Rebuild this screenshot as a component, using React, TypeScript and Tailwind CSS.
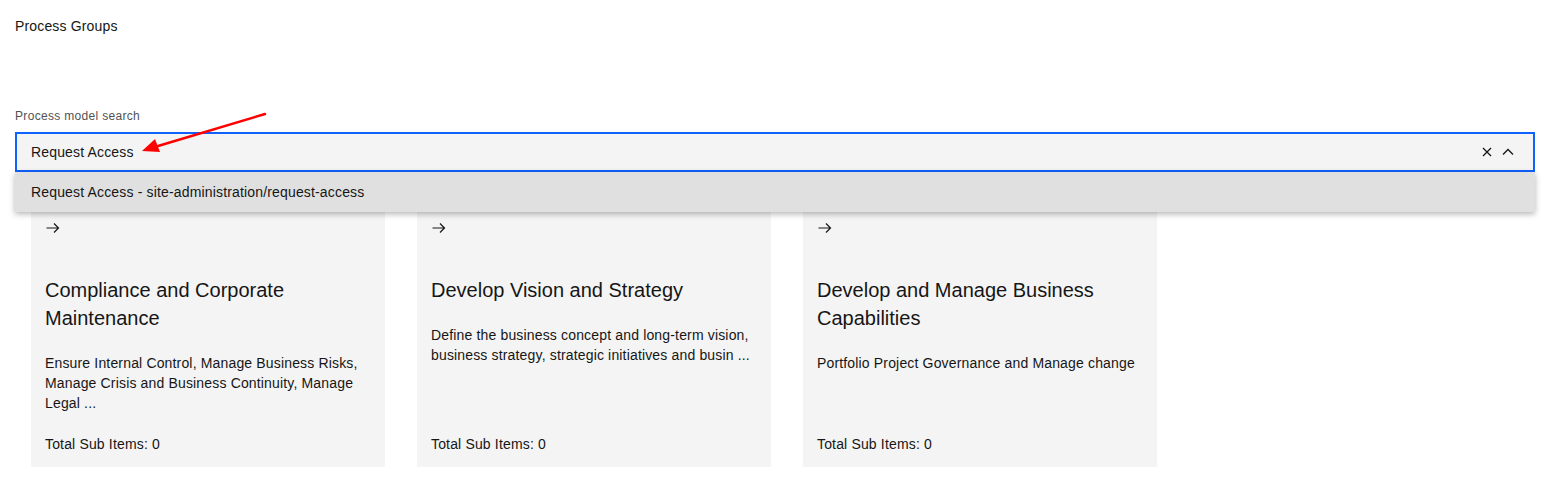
import React from "react";

const cards = [
  {
    title: "Compliance and Corporate Maintenance",
    desc: "Ensure Internal Control, Manage Business Risks, Manage Crisis and Business Continuity, Manage Legal ...",
  },
  {
    title: "Develop Vision and Strategy",
    desc: "Define the business concept and long-term vision, business strategy, strategic initiatives and busin ...",
  },
  {
    title: "Develop and Manage Business Capabilities",
    desc: "Portfolio Project Governance and Manage change",
  },
];

function ArrowRight() {
  return (
    <svg width="16" height="16" viewBox="0 0 16 16" fill="none">
      <path d="M1.5 8h12M9 3.5L13.5 8 9 12.5" stroke="#161616" strokeWidth="1.2" />
    </svg>
  );
}

export default function App() {
  return (
    <div
      className="relative min-h-[493px] bg-white text-[#161616]"
      style={{ fontFamily: '"Liberation Sans", Arial, sans-serif' }}
    >
      <div className="pl-[15px] pt-[16px] w-[1535px]">
        <div className="text-[14px] leading-[20px] tracking-[0.16px]">Process Groups</div>

        <div className="mt-[72px] text-[12px] leading-[16px] tracking-[0.32px] text-[#525252]">Process model search</div>

        <div className="relative mt-[8px]">
          <div className="flex h-[40px] items-center border-2 border-[#0f62fe] bg-[#f4f4f4] pl-[14px] pr-[18px]">
            <div className="flex-1 text-[14px] leading-[18px] tracking-[0.16px] text-[#161616]">Request Access</div>
            <div className="flex items-center gap-[8px]">
              <svg width="12" height="12" viewBox="0 0 12 12" fill="none">
                <path d="M2 2l8 8M10 2l-8 8" stroke="#161616" strokeWidth="1.3" />
              </svg>
              <svg width="14" height="12" viewBox="0 0 14 12" fill="none">
                <path d="M2 8.5L7 3.5l5 5" stroke="#161616" strokeWidth="1.3" />
              </svg>
            </div>
          </div>
          <div className="absolute left-0 right-0 top-full z-10 flex h-[40px] items-center bg-[#e0e0e0] pl-[16px] text-[14px] tracking-[0.16px] text-[#161616] shadow-[0_2px_6px_rgba(0,0,0,0.3)]">
            Request Access - site-administration/request-access
          </div>
        </div>

        <div className="mt-[31px] flex gap-[32px] pl-[16px]">
          {cards.map((c) => (
            <div key={c.title} className="flex h-[264px] w-[354px] flex-col bg-[#f4f4f4] px-[14px] pt-[17px] pb-[13px]">
              <ArrowRight />
              <div className="mt-[40px] text-[20px] leading-[28px] text-[#161616]">{c.title}</div>
              <div className="mt-[21px] text-[14px] leading-[20px] tracking-[0.16px] text-[#161616]">{c.desc}</div>
              <div className="mt-auto text-[14px] leading-[20px] tracking-[0.16px] text-[#161616]">Total Sub Items: 0</div>
            </div>
          ))}
        </div>
      </div>

      <svg className="pointer-events-none absolute left-0 top-0 z-20" width="300" height="170" viewBox="0 0 300 170">
        <line x1="265" y1="114" x2="158" y2="146" stroke="#ff0000" strokeWidth="2.5" strokeLinecap="round" />
        <polygon points="142,151 155,139 160,152" fill="#ff0000" />
      </svg>
    </div>
  );
}
